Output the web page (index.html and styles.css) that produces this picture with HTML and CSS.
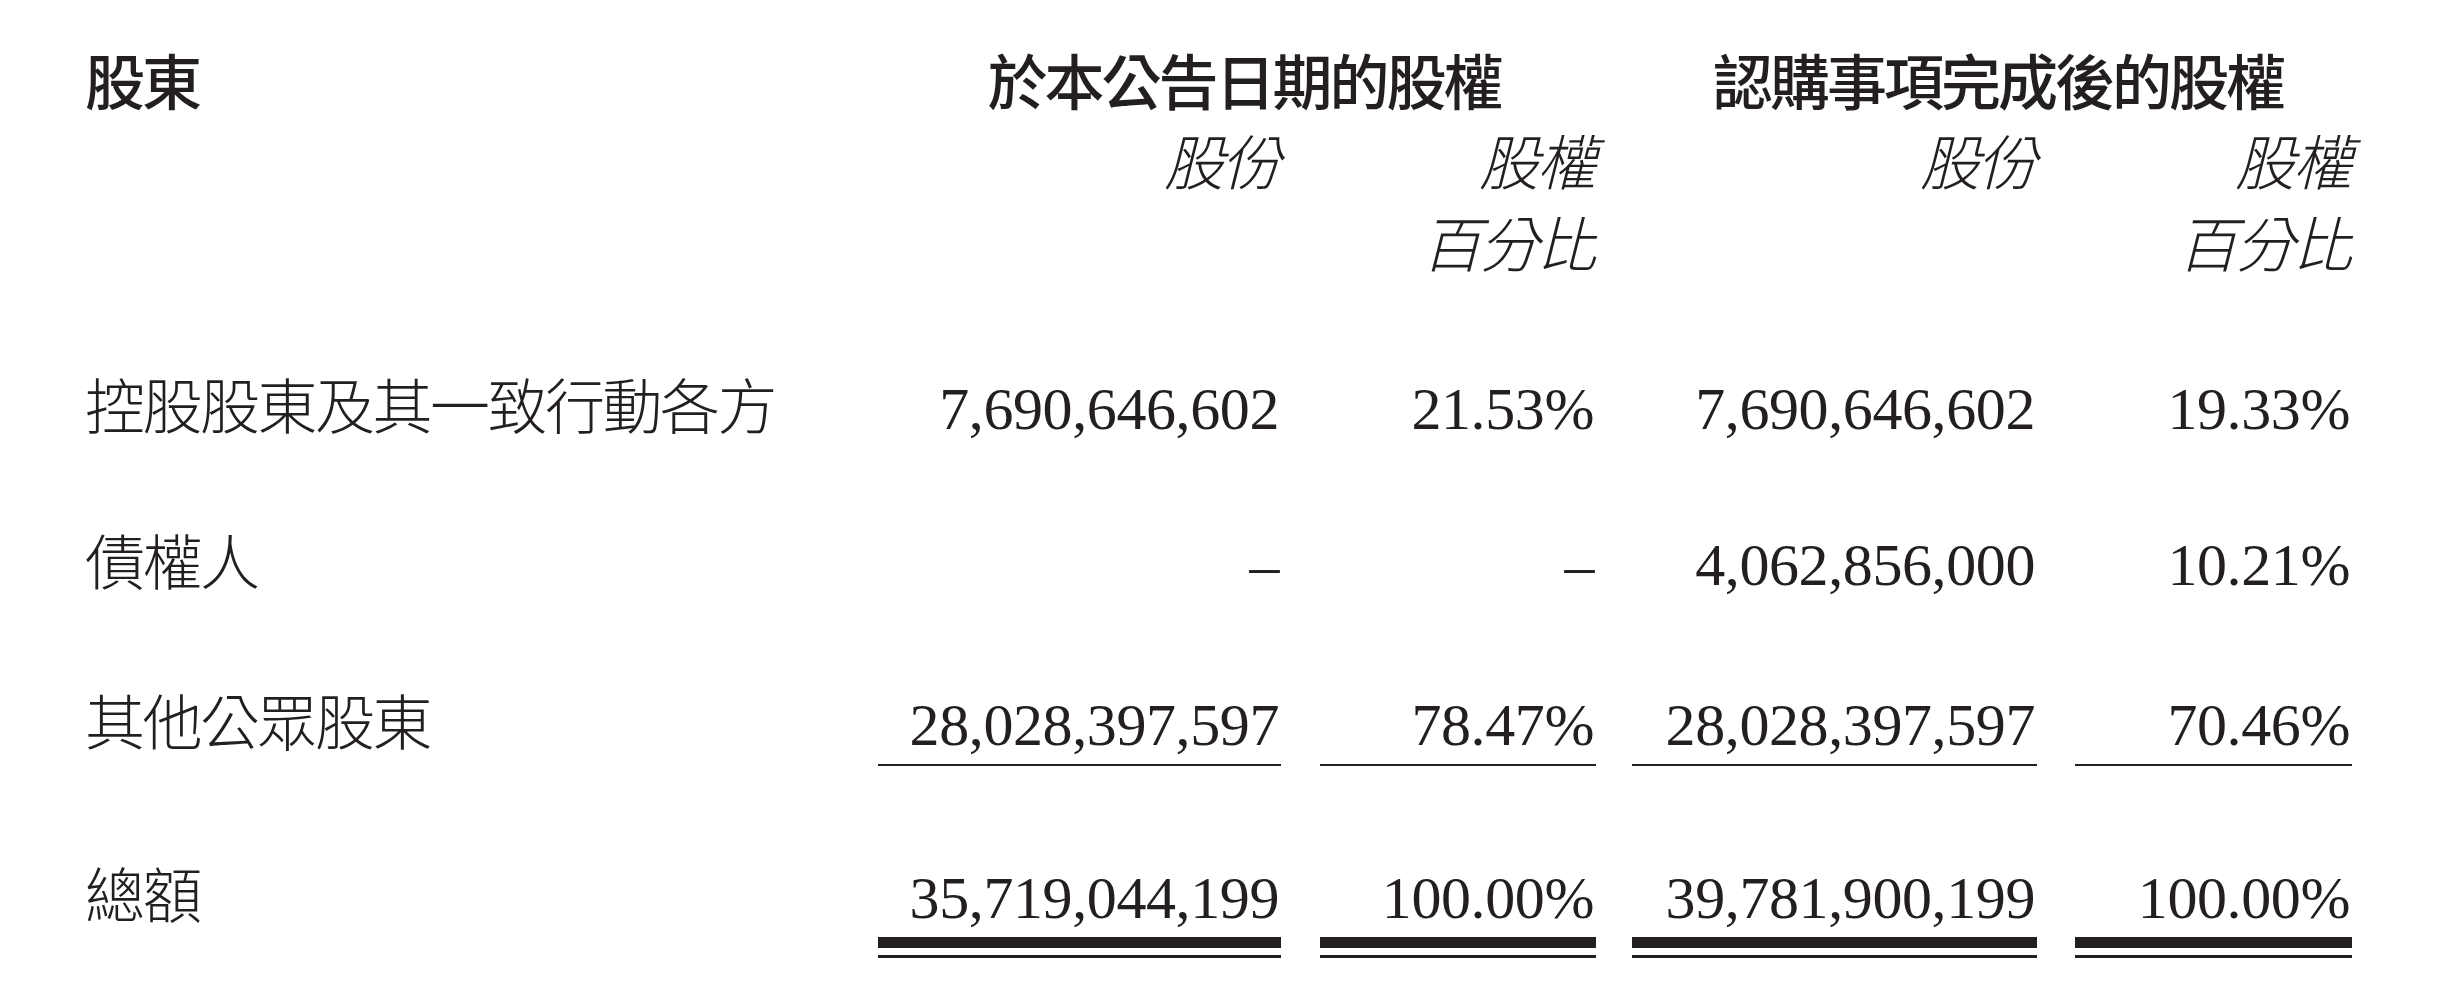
FILE: index.html
```html
<!DOCTYPE html>
<html lang="zh-Hant">
<head>
<meta charset="utf-8">
<title>股權架構</title>
<link rel="stylesheet" href="styles.css">
</head>
<body>
<div class="table">
  <div class="row head">
    <div class="label">股東</div>
    <div class="group g1">於本公告日期的股權</div>
    <div class="group g2">認購事項完成後的股權</div>
  </div>
  <div class="row sub">
    <div class="c1">股份</div>
    <div class="c2">股權<br>百分比</div>
    <div class="c3">股份</div>
    <div class="c4">股權<br>百分比</div>
  </div>
  <div class="row data r1">
    <div class="label">控股股東及其一致行動各方</div>
    <div class="num c1">7,690,646,602</div>
    <div class="num c2">21.53%</div>
    <div class="num c3">7,690,646,602</div>
    <div class="num c4">19.33%</div>
  </div>
  <div class="row data r2">
    <div class="label">債權人</div>
    <div class="num c1">–</div>
    <div class="num c2">–</div>
    <div class="num c3">4,062,856,000</div>
    <div class="num c4">10.21%</div>
  </div>
  <div class="row data r3">
    <div class="label">其他公眾股東</div>
    <div class="num c1 single">28,028,397,597</div>
    <div class="num c2 single">78.47%</div>
    <div class="num c3 single">28,028,397,597</div>
    <div class="num c4 single">70.46%</div>
  </div>
  <div class="row data r4">
    <div class="label">總額</div>
    <div class="num c1 double"><div class="inner">35,719,044,199</div></div>
    <div class="num c2 double"><div class="inner">100.00%</div></div>
    <div class="num c3 double"><div class="inner">39,781,900,199</div></div>
    <div class="num c4 double"><div class="inner">100.00%</div></div>
  </div>
</div>
</body>
</html>
```
FILE: styles.css
```css
html, body {
  margin: 0;
  padding: 0;
  background: #ffffff;
}

body {
  color: #231f20;
  font-family: "Noto Sans CJK TC", "Noto Sans CJK SC", sans-serif;
}

.table {
  padding: 49px 0 0 85px;
}

.row {
  display: grid;
  grid-template-columns: 793px 403px 39px 276px 36px 405px 38px 277px;
}

.label {
  grid-column: 1;
}

.c1 { grid-column: 2; }
.c2 { grid-column: 4; }
.c3 { grid-column: 6; }
.c4 { grid-column: 8; }

/* header */
.head {
  font-size: 60px;
  line-height: 60px;
  font-weight: 500;
  letter-spacing: -3px;
  align-items: start;
}

.group {
  text-align: center;
}

.g1 {
  grid-column: 2 / 5;
  padding-left: 14px;
}

.g2 {
  grid-column: 6 / 9;
  padding-left: 12px;
}

/* sub header */
.sub {
  margin-top: 9px;
  font-size: 60px;
  line-height: 82px;
  font-weight: 300;
  font-style: italic;
  letter-spacing: -2.5px;
  align-items: start;
}

.sub > div {
  text-align: right;
  padding-right: 2px;
}

/* data rows */
.data {
  align-items: baseline;
  font-size: 60px;
  line-height: 60px;
}

.data .label {
  font-weight: 300;
  letter-spacing: -2.5px;
}

.num {
  font-family: "Liberation Serif", "Times New Roman", serif;
  text-align: right;
  padding-right: 2px;
  letter-spacing: -0.4px;
}

.r1 { margin-top: 91px; }
.r2 { margin-top: 90px; }
.r3 { margin-top: 94px; }
.r4 { margin-top: 96px; }

.single {
  padding-bottom: 9px;
  border-bottom: 2px solid #231f20;
}

.double {
  padding-right: 0;
  padding-bottom: 7px;
  border-bottom: 3px solid #231f20;
}

.double .inner {
  padding-right: 2px;
  padding-bottom: 9px;
  border-bottom: 11px solid #231f20;
}
```
